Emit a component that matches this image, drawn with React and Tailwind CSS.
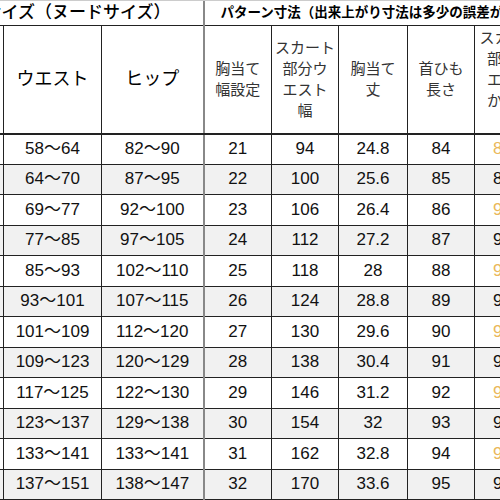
import React from 'react';

const rows = [
  ['58～64', '82～90', '21', '94', '24.8', '84', '86.5'],
  ['64～70', '87～95', '22', '100', '25.6', '85', '88.5'],
  ['69～77', '92～100', '23', '106', '26.4', '86', '90.5'],
  ['77～85', '97～105', '24', '112', '27.2', '87', '92.5'],
  ['85～93', '102～110', '25', '118', '28', '88', '94.5'],
  ['93～101', '107～115', '26', '124', '28.8', '89', '96.5'],
  ['101～109', '112～120', '27', '130', '29.6', '90', '98.5'],
  ['109～123', '120～129', '28', '138', '30.4', '91', '99.5'],
  ['117～125', '122～130', '29', '146', '31.2', '92', '99.5'],
  ['123～137', '129～138', '30', '154', '32', '93', '99.5'],
  ['133～141', '133～141', '31', '162', '32.8', '94', '99.5'],
  ['137～151', '138～147', '32', '170', '33.6', '95', '99.5'],
];

const font = { fontFamily: '"Liberation Sans", "Noto Sans CJK JP", sans-serif' };

function HeadCell({ lines, className = '' }) {
  return (
    <th className={`border border-[#222] border-b-2 font-normal text-[15px] leading-[21px] text-[#333] align-middle text-center ${className}`}>
      {lines.map((l, i) => (
        <div key={i} className="whitespace-nowrap">{l}</div>
      ))}
    </th>
  );
}

export default function App() {
  return (
    <div className="w-[500px] h-[500px] overflow-hidden bg-white border-t border-[#ccc]" style={font}>
      <table className="table-fixed border-collapse -ml-[37px] w-[581px]">
        <colgroup>
          <col className="w-[40px]" />
          <col className="w-[98px]" />
          <col className="w-[102px]" />
          <col className="w-[68px]" />
          <col className="w-[67px]" />
          <col className="w-[69px]" />
          <col className="w-[67px]" />
          <col className="w-[70px]" />
        </colgroup>
        <thead>
          {/* Title band */}
          <tr className="h-[24px]">
            <th colSpan={3} className="border-b border-[#222] text-left font-medium text-[17px] leading-[24px] text-black pl-[21px] whitespace-nowrap">
              サイズ（ヌードサイズ）
            </th>
            <th colSpan={5} className="border-b border-[#222] border-l-2 border-l-[#888] text-left font-bold text-[13.5px] leading-[24px] text-black pl-[16px] whitespace-nowrap overflow-hidden">
              パターン寸法（出来上がり寸法は多少の誤差があります）
            </th>
          </tr>
          {/* Column headings */}
          <tr className="h-[108px]">
            <th className="border border-[#222] border-b-2" />
            <th className="border border-[#222] border-b-2 font-normal text-[18px] text-black">ウエスト</th>
            <th className="border border-[#222] border-b-2 font-normal text-[18px] text-black">ヒップ</th>
            <HeadCell lines={['胸当て', '幅設定']} className="border-l-2 border-l-[#888]" />
            <HeadCell lines={['スカート', '部分ウ', 'エスト', '幅']} />
            <HeadCell lines={['胸当て', '丈']} />
            <HeadCell lines={['首ひも', '長さ']} />
            <HeadCell lines={['スカート', '部分ウ', 'エスト', 'から裾', '丈']} />
          </tr>
        </thead>
        <tbody>
          {rows.map((r, i) => {
            const gray = i % 2 === 1;
            return (
              <tr key={i} className={`h-[30.5px] ${gray ? 'bg-[#f1f1f1]' : 'bg-white'}`}>
                <td className="border border-[#222]" />
                {r.map((v, j) => (
                  <td
                    key={j}
                    className={`border border-[#222] text-center text-[17px] leading-[20px] p-0 whitespace-nowrap ${
                      j === 2 ? 'border-l-2 border-l-[#888]' : ''
                    } ${j === 6 && !gray ? 'text-[#eab85a]' : 'text-[#111]'}`}
                  >
                    {v}
                  </td>
                ))}
              </tr>
            );
          })}
        </tbody>
      </table>
    </div>
  );
}
